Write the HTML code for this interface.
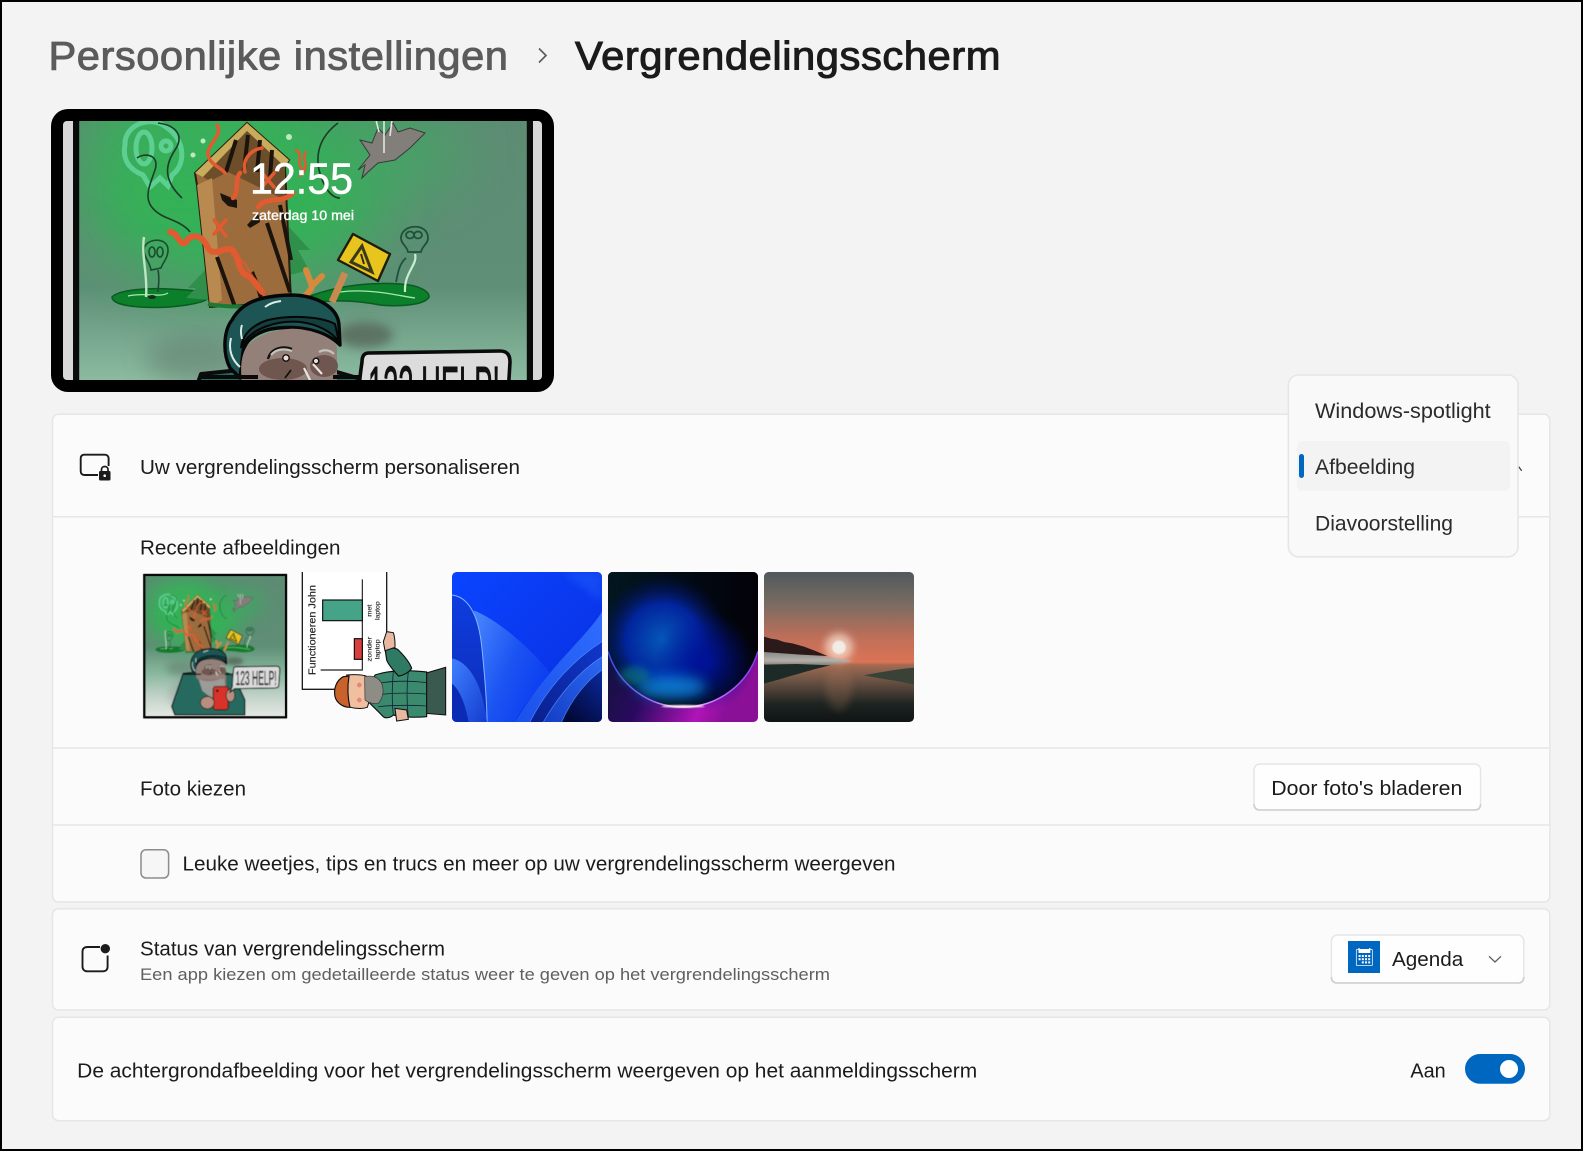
<!DOCTYPE html>
<html lang="nl">
<head>
<meta charset="utf-8">
<title>Vergrendelingsscherm</title>
<style>
html,body{margin:0;padding:0;background:#f3f3f3;width:1583px;height:1151px;overflow:hidden}
svg.page{position:absolute;left:0;top:0;display:block}
text{font-family:"Liberation Sans",sans-serif;fill:#1b1b1b;font-size:20.5px}
</style>
</head>
<body>
<svg class="page" xmlns="http://www.w3.org/2000/svg" width="1583" height="1151" viewBox="0 0 1583 1151">
<defs>
<filter id="b30" x="-50%" y="-50%" width="200%" height="200%"><feGaussianBlur stdDeviation="30"/></filter>
<filter id="b12" x="-50%" y="-50%" width="200%" height="200%"><feGaussianBlur stdDeviation="12"/></filter>
<filter id="b20" x="-60%" y="-60%" width="220%" height="220%"><feGaussianBlur stdDeviation="20"/></filter>
<filter id="b5" x="-50%" y="-50%" width="200%" height="200%"><feGaussianBlur stdDeviation="5"/></filter>
<filter id="b2" x="-50%" y="-50%" width="200%" height="200%"><feGaussianBlur stdDeviation="2"/></filter>
<filter id="soft" x="-5%" y="-5%" width="110%" height="110%"><feGaussianBlur stdDeviation="0.4"/></filter>
<linearGradient id="cbg" x1="0" y1="56" x2="0" y2="518" gradientUnits="userSpaceOnUse">
<stop offset="0" stop-color="#5d8b73"/><stop offset=".5" stop-color="#5f8f76"/><stop offset=".68" stop-color="#86b69c"/><stop offset=".85" stop-color="#c2d3c9"/><stop offset="1" stop-color="#e8eae6"/>
</linearGradient>
<clipPath id="pv"><rect x="63" y="121" width="479" height="259" rx="4"/></clipPath>
<clipPath id="cc"><rect x="73" y="56" width="460" height="462"/></clipPath>
<clipPath id="r15"><rect width="450" height="450" rx="14"/></clipPath>

<g id="comic" clip-path="url(#cc)">
<rect x="73" y="56" width="460" height="462" fill="url(#cbg)"/>
<ellipse cx="235" cy="190" rx="150" ry="95" fill="#30b454" opacity=".95" filter="url(#b30)"/>
<ellipse cx="385" cy="150" rx="80" ry="50" fill="#3fa862" opacity=".7" filter="url(#b30)"/>
<ellipse cx="190" cy="125" rx="100" ry="55" fill="#38b05a" opacity=".8" filter="url(#b30)"/>
<ellipse cx="195" cy="358" rx="50" ry="24" fill="#617c6a" opacity=".55" filter="url(#b12)"/>
<ellipse cx="365" cy="335" rx="28" ry="13" fill="#56665a" opacity=".8" filter="url(#b5)"/>
<ellipse cx="260" cy="440" rx="105" ry="65" fill="#8a948e" opacity=".4" filter="url(#b12)"/>
<!-- ghost -->
<g fill="none" stroke="#66d8a0" stroke-width="5" opacity=".8">
<path d="M125 145C124 125 150 115 166 127C186 140 186 165 172 175L168 186L160 178L150 187L143 175C130 170 122 160 125 145Z"/>
<ellipse cx="144" cy="148" rx="8" ry="16"/><circle cx="166" cy="146" r="5"/>
</g>
<g fill="none" stroke="#1c3c28" stroke-width="1.6">
<path d="M158 123C175 125 185 135 175 150C165 165 163 180 182 198"/>
<path d="M137 158C145 152 160 155 155 170C148 190 140 205 165 217C175 221 185 225 190 232"/>
<path d="M338 123C322 135 315 150 319 170C323 185 330 198 340 198"/>
</g>
<circle cx="203" cy="141" r="2.5" fill="#bfe8bf"/><circle cx="193" cy="155" r="2.5" fill="#bfe8bf"/><circle cx="289" cy="137" r="3" fill="#bfe8bf"/>
<!-- puddles -->
<path d="M112 297C120 289 150 288 170 289C190 290 207 291 210 297C205 304 170 309 140 307C125 306 112 303 112 297Z" fill="#0b7f2a" stroke="#0a5a22" stroke-width="1.5"/>
<path d="M310 296C340 285 370 282 400 284C420 285 430 292 429 297C425 305 400 307 380 305C355 300 330 300 310 303Z" fill="#0b7f2a" stroke="#0a5a22" stroke-width="1.5"/>
<path d="M128 296C145 292 160 298 168 293M340 292C370 288 400 296 415 298" fill="none" stroke="#a8e8b0" stroke-width="1.3"/>
<!-- pines -->
<path d="M207 268L188 288L196 288L186 298L210 300Z" fill="#2f8f4b"/>
<path d="M289 227L310 250L298 250L309 270L290 275Z" fill="#2f8f4b"/>
<!-- left skull -->
<g fill="none" stroke="#1d4a30" stroke-width="1.6">
<path d="M144 250C144 238 168 236 168 250C168 258 163 262 161 268L151 270C150 262 144 258 144 250Z"/>
<ellipse cx="152" cy="252" rx="3" ry="5"/><ellipse cx="160" cy="252" rx="3" ry="5"/><path d="M158 270C160 280 158 288 158 292"/>
</g>
<path d="M144 237C141 255 148 275 146 297" fill="none" stroke="#bfe7c4" stroke-width="2.4"/>
<ellipse cx="152" cy="297" rx="4" ry="2" fill="#11301a"/>
<!-- door -->
<path d="M247 123L195 173L197 185L210 307L291 302L285 167L289 160Z" fill="#9d6c3c" stroke="#2a1e10" stroke-width="2"/>
<path d="M247 123L195 173L203 177L247 131L285 167L289 160Z" fill="#c9ab5c"/>
<path d="M247 131L203 177L210 181L228 172L285 200L285 167Z" fill="#6d4e2a"/>
<path d="M197 185L212 178L222 300L210 307Z" fill="#b88a50"/>
<g stroke="#1b140c" stroke-width="4" fill="none">
<path d="M236 140L226 172M248 135L244 170M260 140L257 172M272 150L270 178"/>
<path d="M217 257L235 307M252 272C258 285 260 295 262 302M267 223L290 292M280 205L291 260"/>
</g>
<path d="M220 193L237 200L237 208L228 206L222 200Z" fill="#1b140c"/>
<path d="M247 225L258 213L260 222L250 228Z" fill="#1b140c"/>
<!-- squiggles -->
<g fill="none" stroke="#e25a30" stroke-width="4" stroke-linecap="round">
<path d="M170 232C178 232 180 248 186 242C192 232 202 236 207 246C212 258 222 248 230 249C240 252 236 272 248 276C255 280 258 288 262 292" stroke-width="6"/>
<path d="M217 125C224 135 206 145 208 155C210 165 222 168 225 173" stroke-width="3.5"/>
<path d="M240 173C234 180 240 190 233 198" stroke-width="4.5"/>
<path d="M262 148C250 150 242 160 245 172" stroke-width="3.5"/>
<path d="M293 193C280 205 268 195 258 207" stroke-width="5"/>
<path d="M262 173L274 187M274 173L262 187M214 220L226 236M226 220L214 234" stroke-width="3.5"/>
<path d="M296 150C305 155 294 165 304 170M306 152C300 160 312 165 300 176" stroke-width="2.5"/>
<path d="M232 255C250 260 250 280 268 300" stroke-width="2.5" opacity=".7"/>
</g>
<!-- crow -->
<path d="M360 140L372 143L378 128L385 135L393 123L398 132L410 128L425 133L410 148L395 160L378 163L368 172L362 178L365 165L358 170L370 155Z" fill="#827e7a" stroke="#3a3a38" stroke-width="1"/>
<path d="M384 120V153M392 120L390 136M376 120L379 132" stroke="#dfe6e0" stroke-width="1.6"/>
<!-- sign -->
<path d="M345 273L332 302" stroke="#c88a50" stroke-width="7"/>
<path d="M353 234L390 254L378 281L338 260Z" fill="#e8c41e" stroke="#1d1d10" stroke-width="2.4" stroke-linejoin="round"/>
<path d="M362 246L372 272L351 262Z" fill="none" stroke="#3a3a1a" stroke-width="3"/>
<path d="M361 254L364 264" stroke="#3a2a10" stroke-width="2"/>
<!-- orange Y -->
<path d="M306 270L312 286L322 276M312 286C312 290 306 294 302 300" fill="none" stroke="#d88a3c" stroke-width="6" stroke-linecap="round"/>
<!-- right skull -->
<g fill="none" stroke="#21503a" stroke-width="1.8">
<path d="M401 238C401 224 428 222 428 238C428 244 422 246 421 252L408 252C407 246 401 244 401 238Z"/>
<ellipse cx="410" cy="235" rx="4" ry="3.5"/><ellipse cx="418" cy="235" rx="4" ry="3.5"/>
<path d="M406 258C398 265 398 275 396 282"/>
</g>
<path d="M415 254C418 265 404 272 405 292" fill="none" stroke="#c8eed0" stroke-width="2.2"/>
<path d="M208 304C240 310 280 304 320 300" stroke="#1a7a35" stroke-width="4" fill="none"/>
<!-- coat & lower figure -->
<path d="M201 374L164 480L174 507L398 507L398 459L361 379L330 370L240 370Z" fill="#256a5e" stroke="#0c0c0c" stroke-width="4" stroke-linejoin="round"/>
<path d="M237 345L334 345L340 430L300 445L262 425Z" fill="#8e7772"/>
<path d="M250 392C275 405 310 400 332 385L336 440L300 460L262 430Z" fill="#9b9c98"/>
<rect x="297" y="416" width="48" height="75" rx="8" fill="#d9332c" stroke="#111" stroke-width="3"/>
<circle cx="310" cy="430" r="4" fill="#111"/>
<ellipse cx="278" cy="468" rx="22" ry="20" fill="#b98e7f" stroke="#111" stroke-width="2.5"/>
<ellipse cx="352" cy="445" rx="14" ry="20" fill="#b98e7f" stroke="#111" stroke-width="2.5"/>
<!-- speech bubble -->
<path d="M369 353L500 351C508 351 510 356 510 362L507 412C507 420 500 421 492 421L366 423L350 435L358 416C358 395 360 375 362 362C362 356 364 353 369 353Z" fill="#dcdcdc" stroke="#0b0b0b" stroke-width="3.6" stroke-linejoin="round"/>
<text x="368" y="411" textLength="132" lengthAdjust="spacingAndGlyphs" style="fill:#111;font-size:64px;stroke:#111;stroke-width:1">123 HELP!</text>
<!-- hat -->
<path d="M230 368C222 352 224 330 232 320C242 302 260 296 290 295C318 295 338 308 339 325L340 345C325 330 300 326 278 328C258 330 245 340 243 352L240 378Z" fill="#1d5454" stroke="#070707" stroke-width="3.4" stroke-linejoin="round"/>
<path d="M243 344C252 328 278 320 300 322C318 324 332 332 339 342L335 324C320 316 290 315 268 320C252 325 242 335 241 348Z" fill="#143f3f" stroke="#060606" stroke-width="2"/>
<path d="M265 307C270 303 275 302 281 301M242 325C240 330 241 335 242 339M231 338C228 350 232 360 240 367" stroke="#dcebe6" stroke-width="2" fill="none"/>
<!-- face -->
<path d="M244 352C250 335 285 325 305 330C322 333 334 340 337 347L337 392L245 392C240 380 240 362 244 352Z" fill="#938078"/>
<ellipse cx="283" cy="369" rx="24" ry="11" fill="#6f564f"/>
<ellipse cx="324" cy="366" rx="14" ry="11" fill="#6f564f"/>
<path d="M268 359C271 347 284 346 292 349" stroke="#111" stroke-width="2.4" fill="none"/>
<path d="M271 355C276 349 284 348 292 351M319 352C324 349 330 350 334 354" stroke="#c6c2bc" stroke-width="2.2" fill="none"/>
<circle cx="286" cy="358" r="3.2" fill="#e8e0d8" stroke="#111" stroke-width="1.4"/><circle cx="316" cy="361" r="2.8" fill="#e8e0d8" stroke="#111" stroke-width="1.4"/>
<path d="M285 378L291 370" stroke="#111" stroke-width="1.8"/>
<path d="M304 368L311 382M313 364L322 374" stroke="#e8e4e0" stroke-width="2.2"/>
<!-- shoulders -->
<path d="M201 377H258M333 377H360" stroke="#0a0a0a" stroke-width="4"/>
<rect x="76" y="59" width="454" height="456" fill="none" stroke="#0b0b0b" stroke-width="6.4"/>
</g>

<linearGradient id="w3a" x1="0" y1="0" x2="1" y2="1"><stop offset="0" stop-color="#0a44ff"/><stop offset="1" stop-color="#0a2ee0"/></linearGradient>
<linearGradient id="w3b" x1="0" y1="0" x2="1" y2=".6"><stop offset="0" stop-color="#4a88ff"/><stop offset=".55" stop-color="#1c54f2"/><stop offset="1" stop-color="#0a3cf0"/></linearGradient>
<linearGradient id="w3c" x1="0" y1="0" x2="0" y2="1"><stop offset="0" stop-color="#0f3de0"/><stop offset="1" stop-color="#0c2cb4"/></linearGradient>
<linearGradient id="w3d" x1="1" y1="0" x2="0" y2="1"><stop offset="0" stop-color="#2f6dff"/><stop offset="1" stop-color="#1b50ea"/></linearGradient>
<linearGradient id="w3e" x1="1" y1="0" x2="0" y2="1"><stop offset="0" stop-color="#1037cc"/><stop offset="1" stop-color="#0a1f8c"/></linearGradient>
<linearGradient id="w3f" x1="1" y1="0" x2="0" y2="1"><stop offset="0" stop-color="#2c68f4"/><stop offset="1" stop-color="#143ec4"/></linearGradient>
<linearGradient id="w3g" x1="1" y1="0" x2=".3" y2="1"><stop offset="0" stop-color="#0a2aa0"/><stop offset="1" stop-color="#020838"/></linearGradient>
<linearGradient id="w3h" x1="0" y1="0" x2="1" y2="1"><stop offset="0" stop-color="#3f80ff"/><stop offset="1" stop-color="#143cd0"/></linearGradient>

<linearGradient id="w4a" gradientUnits="userSpaceOnUse" x1="0" y1="0" x2="450" y2="0"><stop offset="0" stop-color="#02171f"/><stop offset=".6" stop-color="#020812"/><stop offset="1" stop-color="#030208"/></linearGradient>
<radialGradient id="w4b" gradientUnits="userSpaceOnUse" cx="165" cy="205" r="200"><stop offset="0" stop-color="#0558b8"/><stop offset=".55" stop-color="#02259e"/><stop offset="1" stop-color="#020c50" stop-opacity="0"/></radialGradient>
<radialGradient id="w4e" gradientUnits="userSpaceOnUse" cx="290" cy="270" r="150"><stop offset="0" stop-color="#00129a"/><stop offset="1" stop-color="#00129a" stop-opacity="0"/></radialGradient>
<linearGradient id="w4c" x1="0" y1="0" x2="1" y2=".45"><stop offset="0" stop-color="#031820"/><stop offset=".5" stop-color="#2a0a60"/><stop offset=".85" stop-color="#b014b8"/><stop offset="1" stop-color="#8a1098"/></linearGradient>
<linearGradient id="w4d" x1="0" y1="0" x2="1" y2="0"><stop offset="0" stop-color="#3a50e0"/><stop offset=".3" stop-color="#a860ff"/><stop offset=".5" stop-color="#ffe0f4"/><stop offset=".72" stop-color="#c070ff"/><stop offset="1" stop-color="#7040f0"/></linearGradient>

<linearGradient id="w5a" x1="0" y1="0" x2="0" y2="1"><stop offset="0" stop-color="#50595c"/><stop offset=".22" stop-color="#7b6c62"/><stop offset=".44" stop-color="#bf6f59"/><stop offset=".6" stop-color="#dc7355"/><stop offset=".62" stop-color="#a36a52"/><stop offset=".72" stop-color="#6d5445"/><stop offset=".88" stop-color="#1e2422"/><stop offset="1" stop-color="#0f1514"/></linearGradient>
<linearGradient id="w5f" x1="0" y1="0" x2="0" y2="1"><stop offset="0" stop-color="#6c7f80"/><stop offset=".7" stop-color="#adbdba"/><stop offset="1" stop-color="#70807e"/></linearGradient>
</defs>

<!-- background and window frame -->
<rect x="0" y="0" width="1583" height="1151" fill="#000"/>
<rect x="2" y="2" width="1579" height="1147" fill="#f3f3f3"/>

<!-- breadcrumb -->
<text x="48.5" y="69.5" textLength="460" lengthAdjust="spacingAndGlyphs" letter-spacing=".5" style="font-size:39.5px;fill:#5b5b5b;stroke:#5b5b5b;stroke-width:.9">Persoonlijke instellingen</text>
<path d="M539 48.5L546 55.5L539 62.5" fill="none" stroke="#5d5d5d" stroke-width="1.7"/>
<text x="575" y="69.5" textLength="426" lengthAdjust="spacingAndGlyphs" letter-spacing=".5" style="font-size:39.5px;stroke:#1b1b1b;stroke-width:1">Vergrendelingsscherm</text>

<!-- lock screen preview -->
<rect x="51" y="109" width="503" height="283" rx="17" fill="#000"/>
<rect x="63" y="121" width="479" height="259" rx="4" fill="#d8d8d8"/>
<g clip-path="url(#pv)"><use href="#comic"/></g>
<text x="250" y="193.5" textLength="103" lengthAdjust="spacingAndGlyphs" style="font-size:44px;fill:#fff;stroke:#fff;stroke-width:.5">12:55</text>
<text x="252" y="220" textLength="102" lengthAdjust="spacingAndGlyphs" style="font-size:14px;fill:#fff;stroke:#fff;stroke-width:.35">zaterdag 10 mei</text>

<!-- card 1 -->
<rect x="52.5" y="414.2" width="1497.3" height="487.8" rx="6" fill="#fbfbfb" stroke="#e6e6e6" stroke-width="1.5"/>
<path d="M53 516.7H1549M53 748H1549M53 825H1549" stroke="#e6e6e6" stroke-width="1.5" fill="none"/>

<path d="M98 475H84.5C82 475 80.7 473.5 80.7 471V458.5C80.7 456 82 454.7 84.5 454.7H104.5C107 454.7 108.6 456 108.6 458.5V466" fill="none" stroke="#1b1b1b" stroke-width="1.9"/>
<rect x="99" y="471" width="11.5" height="9.5" rx="1.2" fill="#1b1b1b"/>
<path d="M101.5 471.5V469.5C101.5 465.5 108 465.5 108 469.5V471.5" fill="none" stroke="#1b1b1b" stroke-width="1.7"/>
<circle cx="104.7" cy="475.7" r="1.3" fill="#fbfbfb"/>

<text x="140" y="474" textLength="380" lengthAdjust="spacingAndGlyphs">Uw vergrendelingsscherm personaliseren</text>
<text x="140" y="554.5" textLength="200.5" lengthAdjust="spacingAndGlyphs">Recente afbeeldingen</text>

<!-- thumbnails -->
<g filter="url(#soft)">
<svg x="143.3" y="574" width="143.7" height="144.3" viewBox="73 56 460 462"><use href="#comic"/></svg>
</g>
<rect x="144.3" y="575" width="141.7" height="142.3" fill="none" stroke="#0a0a0a" stroke-width="2"/>

<svg x="130" y="560" width="320" height="170" viewBox="0 0 960 510" filter="url(#soft)">
<rect x="517" y="36" width="253" height="352" fill="#fff"/>
<path d="M517 36V388H640M770 36V215" fill="none" stroke="#1a1a1a" stroke-width="4"/>
<path d="M697 58V330H572" fill="none" stroke="#222" stroke-width="3.5"/>
<rect x="578" y="120" width="119" height="62" fill="#44a388" stroke="#111" stroke-width="3.5"/>
<rect x="673" y="236" width="24" height="62" fill="#d8403c" stroke="#111" stroke-width="3.5"/>
<text transform="translate(556,345) rotate(-90)" textLength="270" lengthAdjust="spacingAndGlyphs" style="font-size:30px;fill:#222;stroke:#222;stroke-width:.5">Functioneren John</text>
<text transform="translate(724,170) rotate(-90)" textLength="36" lengthAdjust="spacingAndGlyphs" style="font-size:20px;fill:#222;stroke:#222;stroke-width:.4">met</text>
<text transform="translate(748,180) rotate(-90)" textLength="56" lengthAdjust="spacingAndGlyphs" style="font-size:20px;fill:#222;stroke:#222;stroke-width:.4">laptop</text>
<text transform="translate(724,305) rotate(-90)" textLength="75" lengthAdjust="spacingAndGlyphs" style="font-size:20px;fill:#222;stroke:#222;stroke-width:.4">zonder</text>
<text transform="translate(748,298) rotate(-90)" textLength="60" lengthAdjust="spacingAndGlyphs" style="font-size:20px;fill:#222;stroke:#222;stroke-width:.4">laptop</text>
<path d="M885 340L947 322V465L885 460Z" fill="#3b5a50" stroke="#111" stroke-width="3"/>
<path d="M735 345C780 330 840 330 890 336V470C850 474 810 470 790 465C780 475 765 475 760 470L715 425L720 375Z" fill="#3a8a6e" stroke="#111" stroke-width="3.5" stroke-linejoin="round"/>
<path d="M790 335C786 380 786 430 790 465M835 332C830 380 830 430 835 470M735 405C790 398 840 398 890 402M745 370C790 362 840 362 890 368M745 440C790 435 840 435 890 438" stroke="#123" stroke-width="2.5" fill="none"/>
<path d="M766 272C780 262 795 262 805 270C825 290 840 310 845 325C835 340 815 348 805 348C790 330 775 315 770 300Z" fill="#2f7a64" stroke="#111" stroke-width="3.5"/>
<path d="M770 215L790 218C796 235 795 250 795 262L765 272L760 245Z" fill="#e8b8a0" stroke="#111" stroke-width="3"/>
<path d="M795 445L830 450L835 478L800 483Z" fill="#e8b8a0" stroke="#111" stroke-width="3"/>
<path d="M650 345C680 342 705 345 712 350C722 375 722 415 712 442C695 448 670 445 655 440Z" fill="#efbfa0" stroke="#111" stroke-width="3"/>
<path d="M704 350C725 345 745 350 755 370C765 395 755 420 745 430C730 432 715 428 705 420Z" fill="#8d8d86" stroke="#333" stroke-width="2"/>
<path d="M640 350C620 360 610 385 615 410C620 430 640 442 660 442C652 410 652 380 657 348Z" fill="#c8622a" stroke="#111" stroke-width="3.5"/>
<circle cx="688" cy="375" r="7" fill="#e07060" opacity=".7"/><circle cx="688" cy="420" r="7" fill="#e07060" opacity=".7"/>
</svg>

<svg x="452" y="572" width="150" height="150" viewBox="0 0 450 450">
<g clip-path="url(#r15)">
<rect width="450" height="450" fill="url(#w3a)"/>
<path d="M450 0V90L330 0Z" fill="#2a6cff" opacity=".35" filter="url(#b12)"/>
<path d="M65 115C130 140 230 220 300 310C260 350 210 400 189 450H105C100 320 90 200 65 115Z" fill="url(#w3b)"/>
<path d="M0 69C50 75 80 130 90 230C100 330 105 400 105 450H0Z" fill="url(#w3c)"/>
<path d="M0 69C50 75 80 130 90 230C100 330 105 400 105 450" fill="none" stroke="#7fb8ff" stroke-width="3"/>
<path d="M0 259C50 270 90 330 105 450H0Z" fill="url(#w3h)"/>
<path d="M0 335C25 355 40 400 50 450H0Z" fill="#0b2bb4"/>
<path d="M450 119C400 200 300 270 189 450H450Z" fill="url(#w3d)"/>
<path d="M450 209C370 260 290 340 234 450H450Z" fill="url(#w3e)"/>
<path d="M450 254C380 300 320 370 274 450H450Z" fill="url(#w3f)"/>
<path d="M450 294C400 330 360 380 329 450H450Z" fill="url(#w3g)"/>
<path d="M450 209C370 260 290 340 234 450M450 254C380 300 320 370 274 450M450 294C400 330 360 380 329 450" fill="none" stroke="#5b9aff" stroke-width="2" opacity=".8"/>
</g>
</svg>

<svg x="608" y="572" width="150" height="150" viewBox="0 0 450 450">
<g clip-path="url(#r15)">
<rect width="450" height="450" fill="url(#w4c)"/>
<rect width="450" height="238" fill="url(#w4a)"/>
<circle cx="225" cy="170" r="235" fill="url(#w4a)"/>
<circle cx="165" cy="205" r="200" fill="url(#w4b)"/>
<circle cx="290" cy="270" r="150" fill="url(#w4e)"/>
<ellipse cx="190" cy="345" rx="105" ry="34" fill="#0a94ea" opacity=".75" filter="url(#b20)"/>
<ellipse cx="80" cy="310" rx="45" ry="28" fill="#0a8a88" opacity=".55" filter="url(#b12)"/>
<path d="M0 238A235 235 0 0 0 450 238" fill="none" stroke="url(#w4d)" stroke-width="4.5"/>
<ellipse cx="225" cy="403" rx="65" ry="4" fill="#ffe6f4" filter="url(#b2)"/>
</g>
</svg>

<svg x="764" y="572" width="150" height="150" viewBox="0 0 450 450">
<g clip-path="url(#r15)">
<rect width="450" height="450" fill="url(#w5a)"/>
<circle cx="225" cy="226" r="42" fill="#f6d8c8" opacity=".8" filter="url(#b12)"/>
<circle cx="225" cy="226" r="20" fill="#f3ece4" filter="url(#b2)"/>
<path d="M0 232C60 242 130 244 195 256L270 268L180 280L90 276L0 278Z" fill="url(#w5f)" opacity=".85" filter="url(#b2)"/>
<path d="M0 194L20 200L40 203L60 210L85 214L120 224L150 235L190 252L110 248L0 240Z" fill="#2a1a1a"/>
<path d="M0 278L100 276L200 280C150 290 90 310 0 335Z" fill="#1c2a28"/>
<path d="M300 310C350 300 400 292 450 287V338C410 328 350 320 300 310Z" fill="#3a4238"/>
<ellipse cx="225" cy="345" rx="40" ry="70" fill="#b07a5a" opacity=".25" filter="url(#b12)"/>
</g>
</svg>

<text x="140" y="795.5" textLength="106" lengthAdjust="spacingAndGlyphs">Foto kiezen</text>
<rect x="1254" y="764" width="226.6" height="46" rx="6" fill="#fefefe" stroke="#e6e6e6" stroke-width="1.5"/>
<path d="M1254 804Q1254 810 1260 810H1474.6Q1480.6 810 1480.6 804" fill="none" stroke="#cfcfcf" stroke-width="1.6"/>
<text x="1271.3" y="795" textLength="191" lengthAdjust="spacingAndGlyphs">Door foto's bladeren</text>

<rect x="141" y="849.7" width="27.6" height="28.3" rx="5" fill="#f6f6f6" stroke="#8c8c8c" stroke-width="1.5"/>
<text x="182.5" y="870.7" textLength="713" lengthAdjust="spacingAndGlyphs">Leuke weetjes, tips en trucs en meer op uw vergrendelingsscherm weergeven</text>

<!-- card 2 -->
<rect x="52.5" y="908.7" width="1497.3" height="101.3" rx="6" fill="#fbfbfb" stroke="#e6e6e6" stroke-width="1.5"/>
<path d="M100 947H87.5C84.5 947 82.5 948.5 82.5 951.5V966.5C82.5 969.5 84.5 971.3 87.5 971.3H103C106 971.3 107.6 969.5 107.6 966.5V955.5" fill="none" stroke="#1b1b1b" stroke-width="1.9"/>
<circle cx="105.3" cy="948.7" r="4.7" fill="#1b1b1b"/>
<text x="140" y="955.7" textLength="305" lengthAdjust="spacingAndGlyphs">Status van vergrendelingsscherm</text>
<text x="140" y="980" textLength="690" lengthAdjust="spacingAndGlyphs" style="font-size:16.5px;fill:#5f5f5f">Een app kiezen om gedetailleerde status weer te geven op het vergrendelingsscherm</text>

<rect x="1331.4" y="935" width="192.4" height="48" rx="6" fill="#fefefe" stroke="#e6e6e6" stroke-width="1.5"/>
<path d="M1331.4 977Q1331.4 983 1337.4 983H1517.8Q1523.8 983 1523.8 977" fill="none" stroke="#cfcfcf" stroke-width="1.6"/>
<rect x="1348" y="941" width="32" height="32" fill="#0067c0"/>
<rect x="1356.4" y="949.4" width="16" height="16.2" rx=".8" fill="none" stroke="#cfe3f5" stroke-width=".9"/>
<rect x="1358.5" y="949" width="11.8" height="4" fill="#fff"/>
<path d="M1359 948V950M1369.8 948V950" stroke="#fff" stroke-width="1.2"/>
<g fill="#fff">
<rect x="1358.6" y="955" width="2" height="2"/><rect x="1361.8" y="955" width="2" height="2"/><rect x="1365" y="955" width="2" height="2"/><rect x="1368.2" y="955" width="2" height="2"/>
<rect x="1358.6" y="958.2" width="2" height="2"/><rect x="1361.8" y="958.2" width="2" height="2"/><rect x="1365" y="958.2" width="2" height="2"/><rect x="1368.2" y="958.2" width="2" height="2"/>
<rect x="1361.8" y="961.4" width="2" height="2"/><rect x="1365" y="961.4" width="2" height="2"/><rect x="1368.2" y="961.4" width="2" height="2"/>
</g>
<text x="1392" y="966" textLength="71.3" lengthAdjust="spacingAndGlyphs">Agenda</text>
<path d="M1489 956.3L1495 962L1501 956.3" fill="none" stroke="#5d5d5d" stroke-width="1.3"/>

<!-- card 3 -->
<rect x="52.5" y="1017.3" width="1497.3" height="103.4" rx="6" fill="#fbfbfb" stroke="#e6e6e6" stroke-width="1.5"/>
<text x="77.2" y="1077.7" textLength="900" lengthAdjust="spacingAndGlyphs">De achtergrondafbeelding voor het vergrendelingsscherm weergeven op het aanmeldingsscherm</text>
<text x="1410.4" y="1077.7" textLength="35.3" lengthAdjust="spacingAndGlyphs">Aan</text>
<rect x="1465" y="1054" width="60" height="29.7" rx="14.85" fill="#0067c0"/>
<circle cx="1509" cy="1069" r="9" fill="#fff"/>

<!-- flyout -->
<path d="M1518.5 466.5L1521.7 470.7" stroke="#333" stroke-width="1.2"/>
<rect x="1288.4" y="375" width="229.6" height="181.8" rx="10" fill="#f9f9f9" stroke="#e6e6e6" stroke-width="1.6"/>
<rect x="1297" y="441" width="213" height="49.7" rx="5" fill="#f3f3f3"/>
<rect x="1299" y="454" width="5" height="24" rx="2.5" fill="#0067c0"/>
<text x="1315" y="418" textLength="175.7" lengthAdjust="spacingAndGlyphs" style="font-size:21px;fill:#2b2b2b">Windows-spotlight</text>
<text x="1315" y="474" textLength="100" lengthAdjust="spacingAndGlyphs" style="font-size:21px;fill:#2b2b2b">Afbeelding</text>
<text x="1315" y="530.4" textLength="138" lengthAdjust="spacingAndGlyphs" style="font-size:21px;fill:#2b2b2b">Diavoorstelling</text>
</svg>
</body>
</html>
